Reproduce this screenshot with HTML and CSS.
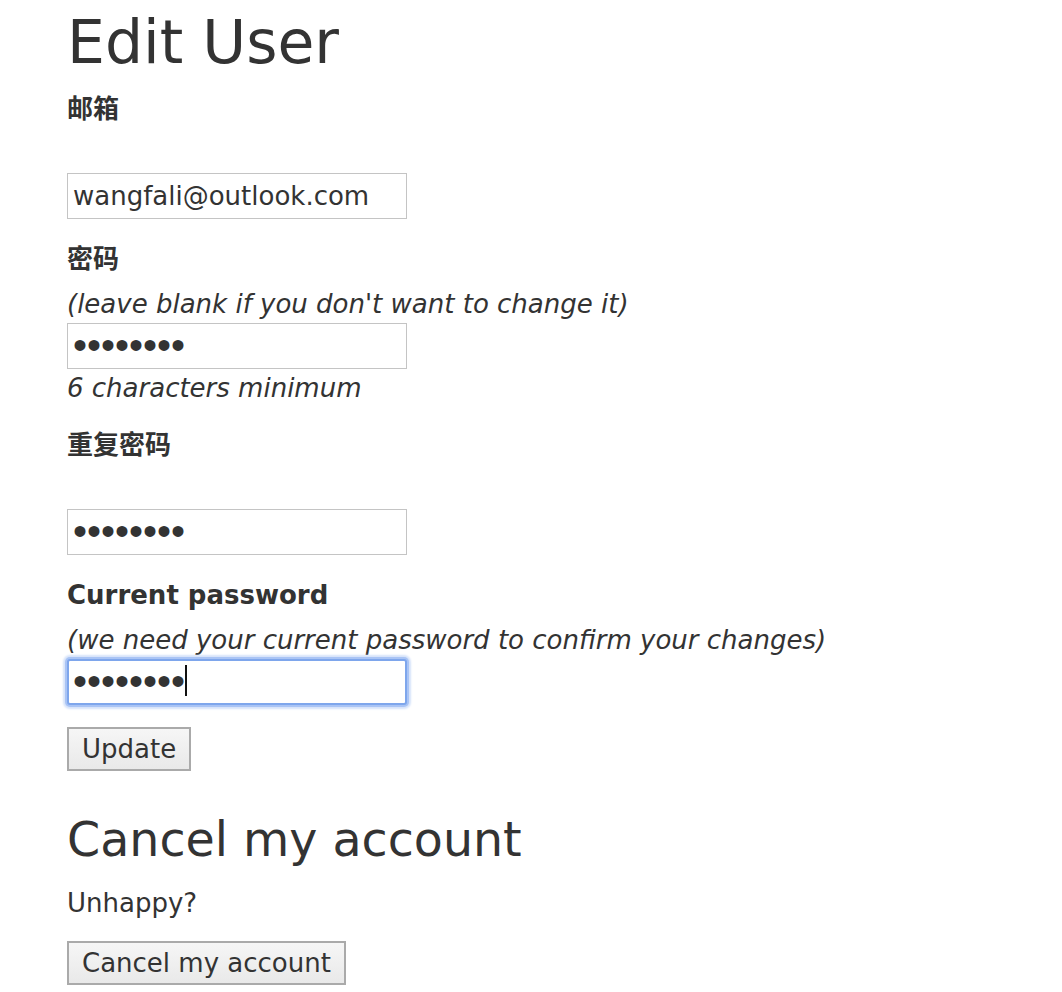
FILE: index.html
```html
<!DOCTYPE html>
<html lang="en">
<head>
<meta charset="utf-8">
<title>Edit User</title>
<link rel="stylesheet" href="styles.css">
</head>
<body>
<main class="page">
  <h1 class="title">Edit User</h1>
  <form class="form">
    <div class="field">
      <label class="label">邮箱</label>
      <div class="hint"></div>
      <input class="input" type="email" value="wangfali@outlook.com">
    </div>
    <div class="field">
      <label class="label">密码</label>
      <div class="hint"><i>(leave blank if you don't want to change it)</i></div>
      <input class="input" type="password" value="12345678">
      <div class="note"><i>6 characters minimum</i></div>
    </div>
    <div class="field">
      <label class="label">重复密码</label>
      <div class="hint"></div>
      <input class="input" type="password" value="12345678">
    </div>
    <div class="field">
      <label class="label label-en">Current password</label>
      <div class="hint"><i>(we need your current password to confirm your changes)</i></div>
      <div class="focus-wrap">
        <input class="input input-focus" type="password" value="12345678">
        <span class="caret"></span>
      </div>
    </div>
    <div class="actions">
      <button class="btn" type="button">Update</button>
    </div>
  </form>
  <h2 class="subtitle">Cancel my account</h2>
  <p class="text">Unhappy?</p>
  <button class="btn" type="button">Cancel my account</button>
</main>
</body>
</html>
```

FILE: styles.css
```css
html, body {
  margin: 0;
  padding: 0;
  background: #ffffff;
}
body {
  font-family: "DejaVu Sans", "Noto Sans CJK SC", sans-serif;
  font-size: 26px;
  color: #333333;
}
.page {
  padding: 7px 0 0 67px;
  display: flex;
  flex-direction: column;
  align-items: flex-start;
}
.title {
  margin: 0;
  font-size: 60px;
  font-weight: normal;
  line-height: 70px;
  color: #333;
}
.form {
  margin-top: 13px;
  display: flex;
  flex-direction: column;
  align-items: flex-start;
}
.field {
  display: flex;
  flex-direction: column;
  align-items: flex-start;
  margin-bottom: 21px;
}
.label {
  display: block;
  font-weight: bold;
  line-height: 38px;
  height: 38px;
}
.hint {
  margin-top: 7px;
  line-height: 38px;
  height: 38px;
}
.note {
  line-height: 38px;
  height: 38px;
  margin-bottom: -2px;
}
.input {
  box-sizing: border-box;
  width: 340px;
  height: 46px;
  margin: 0;
  padding: 0 5px;
  border: 1px solid #c4c4c4;
  background: #fff;
  font-family: "DejaVu Sans", sans-serif;
  font-size: 26px;
  color: #333;
  outline: none;
}
input[type="password"] {
  font-family: "Liberation Sans", sans-serif;
  font-size: 40px;
  padding-left: 5px;
  padding-bottom: 2px;
}
.focus-wrap {
  position: relative;
}
.input-focus {
  border: 2px solid #7ea6ec;
  box-shadow: 0 0 0 2px #a9c4f5, 0 0 2px 4px #d6e3fa;
  border-radius: 3px;
}
input.input-focus {
  padding-left: 4px;
}
.caret {
  position: absolute;
  left: 118px;
  top: 6px;
  width: 2px;
  height: 31px;
  background: #111;
}
.actions {
  margin-top: 1px;
}
.btn {
  box-sizing: border-box;
  height: 44px;
  padding: 0 13px;
  margin: 0;
  font-family: "DejaVu Sans", sans-serif;
  font-size: 26px;
  color: #333;
  border: 2px solid #aaaaaa;
  border-radius: 0;
  background: linear-gradient(#f6f6f6, #e9e9e9);
}
.subtitle {
  margin: 41px 0 0 0;
  font-size: 47.5px;
  font-weight: normal;
  line-height: 56px;
  color: #333;
}
.text {
  margin: 16px 0 19px 0;
  line-height: 38px;
}
```
